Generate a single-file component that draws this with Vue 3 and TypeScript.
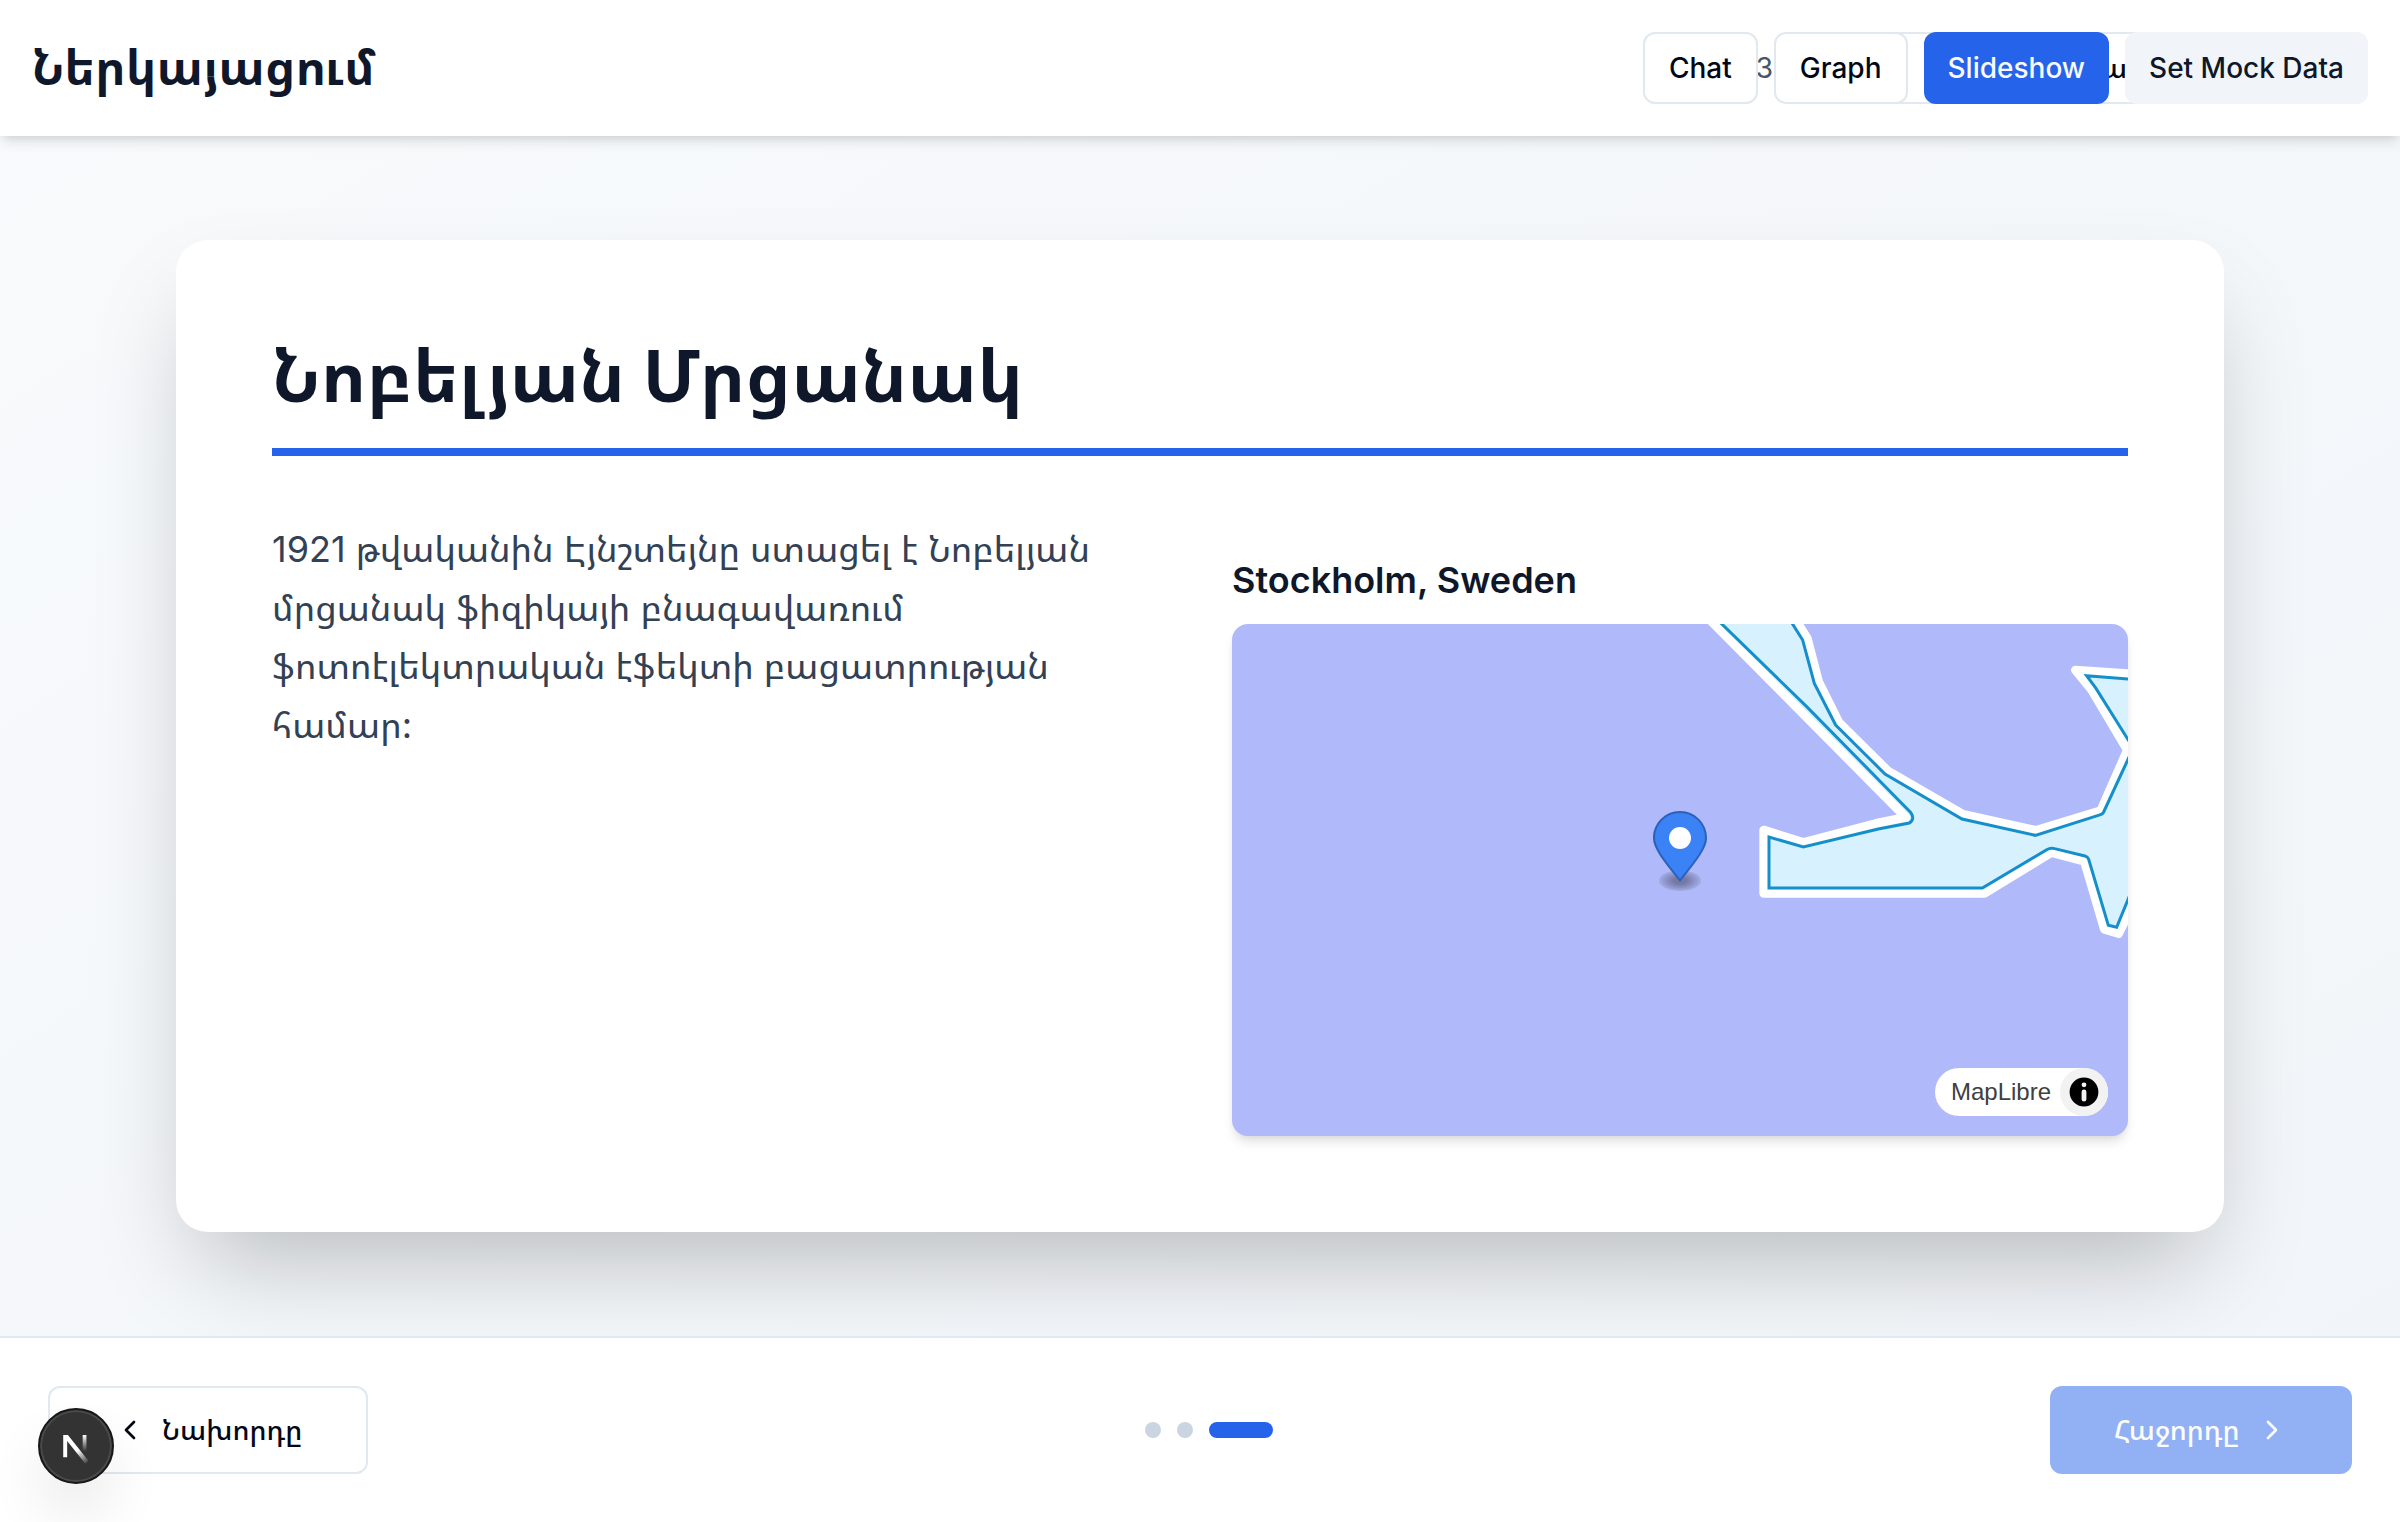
<script setup lang="ts">
interface NavButton {
  label: string
  kind: 'outline' | 'primary' | 'secondary'
}

const navButtons: NavButton[] = [
  { label: 'Chat', kind: 'outline' },
  { label: 'Graph', kind: 'outline' },
  { label: 'Slideshow', kind: 'primary' },
  { label: 'Set Mock Data', kind: 'secondary' },
]

const lines: string[] = [
  '1921 թվականին Էյնշտեյնը ստացել է Նոբելյան',
  'մրցանակ ֆիզիկայի բնագավառում',
  'ֆոտոէլեկտրական էֆեկտի բացատրության',
  'համար:',
]

const slideCount = 3
const current = 3

// Stacked translucent ellipses form the soft shadow below the marker
const shadowRings: [number, number][] = [
  [10.5, 5.25], [10.5, 5.25], [9.5, 4.77], [8.5, 4.3], [7.5, 3.82],
  [6.5, 3.34], [5.5, 2.86], [4.5, 2.39], [3.5, 1.91],
]
</script>

<template>
  <div class="page">
    <header class="header">
      <h1 class="brand">Ներկայացում</h1>
      <div class="under">
        <span class="counter">{{ current }}</span>
        <span class="under-button"><span>ա</span></span>
      </div>
      <nav class="nav">
        <button v-for="b in navButtons" :key="b.label" class="btn" :class="b.kind">{{ b.label }}</button>
      </nav>
    </header>

    <main class="stage">
      <article class="card">
        <h2 class="title">Նոբելյան Մրցանակ</h2>
        <div class="columns">
          <p class="body">
            <span v-for="(line, i) in lines" :key="i" class="line">{{ line }}</span>
          </p>
          <section class="place">
            <h3>Stockholm, Sweden</h3>
            <div class="map">
              <svg class="map-art" viewBox="0 0 896 512">
                <g transform="translate(408 -14) scale(.33333)">
                  <path class="water" d="M202 22 797 622 708 640 490 697 371 660V850H1034L1234 728 1333 754 1393 958 1436 971 1520 800V300L1462 420 1382 602 1187 661 969 613 743 482 597 337 536 215 502 85 460 18Z" />
                  <path class="water" d="M1520 195 1306 180 1355 240 1462 420 1520 420Z" />
                  <path class="shore-outer" d="M202 22 797 622 708 640 490 697 371 660V850H1034L1234 728 1333 754 1393 958 1436 971 1520 800" />
                  <path class="shore-outer" d="M460 18 502 85 536 215 597 337 743 482 969 613 1187 661 1382 602 1462 420 1355 240 1306 180 1520 195" />
                  <path class="shore-inner" d="M225 22 500 290 812 607Q826 628 808 639L715 657 490 711 387 681V834H1027L1220 719Q1232 712 1244 716L1335 738Q1343 740 1346 748L1405 946 1430 952 1500 780" />
                  <path class="shore-inner" d="M440 14 488 90 523 220 587 345 735 492 966 627 1186 676 1382 614Q1388 612 1391 606L1500 370" />
                  <path class="shore-inner" d="M1500 210 1340 197 1368 235 1500 446" />
                </g>
              </svg>
              <svg class="pin" viewBox="0 0 27 41">
                <g transform="translate(3 29)">
                  <ellipse v-for="([rx, ry], i) in shadowRings" :key="i" cx="10.5" cy="5.8" :rx="rx" :ry="ry" opacity=".045" />
                </g>
                <path fill="#3b82f6" d="M27 13.5C27 19.07 20.25 27 13.5 35.4C6.75 27 0 19.22 0 13.5C0 6.04 6.04 0 13.5 0S27 6.04 27 13.5Z" />
                <path fill="none" stroke="#000" stroke-opacity=".25" d="M26.5 13.5C26.5 19 20 26.5 13.5 34.7C7 26.5 .5 19 .5 13.5A13 13 0 0 1 26.5 13.5Z" />
                <circle cx="13.5" cy="13.5" r="5.5" fill="#fff" />
              </svg>
              <div class="attribution">
                <span>MapLibre</span>
                <i class="info">
                  <svg viewBox="0 0 20 20" fill-rule="evenodd">
                    <path d="M4 10a6 6 0 1 0 12 0 6 6 0 1 0-12 0m5-3a1 1 0 1 0 2 0 1 1 0 1 0-2 0m0 3a1 1 0 1 1 2 0v3a1 1 0 1 1-2 0" />
                  </svg>
                </i>
              </div>
            </div>
          </section>
        </div>
      </article>
    </main>

    <footer class="footer">
      <button class="step prev">
        <svg viewBox="0 0 24 24"><path d="m15 18-6-6 6-6" /></svg>
        <span>Նախորդը</span>
      </button>
      <div class="dots">
        <i v-for="n in slideCount" :key="n" :class="{ active: n === current }"></i>
      </div>
      <button class="step next">
        <span>Հաջորդը</span>
        <svg viewBox="0 0 24 24"><path d="m9 18 6-6-6-6" /></svg>
      </button>
    </footer>

    <div class="dev-badge">
      <svg viewBox="0 0 40 40" fill="none">
        <defs>
          <linearGradient id="stem" x1="0" y1="0" x2="0" y2="1">
            <stop stop-color="#fff" /><stop offset="1" stop-color="#fff" stop-opacity="0" />
          </linearGradient>
          <linearGradient id="slash" gradientUnits="userSpaceOnUse" x1="21.5" y1="22" x2="27.2" y2="29.5">
            <stop stop-color="#fff" /><stop offset="1" stop-color="#fff" stop-opacity="0" />
          </linearGradient>
        </defs>
        <rect x="23.7" y="13.9" width="2.1" height="9" fill="url(#stem)" />
        <path d="M12.9 13.9V26.2H15.1V17.2L25.2 29.8 27 28.4 15.5 13.9Z" fill="url(#slash)" />
      </svg>
    </div>
  </div>
</template>

<style>
body {
  margin: 0;
  overflow: hidden;
}
</style>

<style scoped>
* {
  box-sizing: border-box;
}
.page {
  width: 2400px;
  height: 1522px;
  display: flex;
  flex-direction: column;
  position: relative;
  overflow: hidden;
  background: linear-gradient(to bottom right, #f8fafc, #f1f5f9);
  font-family: Inter, 'Noto Sans Armenian', 'DejaVu Sans', sans-serif;
  color: #0f172a;
}
h1, h2, h3, p {
  margin: 0;
}
button {
  font: inherit;
  margin: 0;
}
.line {
  white-space: nowrap;
}
.header {
  height: 136px;
  flex: none;
  display: flex;
  align-items: center;
  justify-content: space-between;
  padding: 0 32px;
  background: #fff;
  position: relative;
  z-index: 2;
  box-shadow: 0 8px 12px -2px rgb(0 0 0 / .1), 0 4px 8px -4px rgb(0 0 0 / .1);
}
.brand {
  font-size: 48px;
  line-height: 64px;
  font-weight: 700;
}
.nav {
  display: flex;
  gap: 16px;
  position: relative;
}
.btn {
  height: 72px;
  padding: 0 24px;
  border: 0;
  border-radius: 12px;
  font-size: 28px;
  line-height: 40px;
  font-weight: 500;
  white-space: nowrap;
}
.outline {
  background: #fff;
  border: 2px solid #e2e8f0;
  color: #020817;
}
.primary {
  background: #2563eb;
  color: #f8fafc;
}
.secondary {
  background: #f1f5f9;
  color: #0f172a;
}
/* slide controls that the floating nav lies over */
.under {
  position: absolute;
  right: 32px;
  top: 32px;
  height: 72px;
  display: flex;
  align-items: center;
  gap: 32px;
  font-size: 28px;
  font-weight: 400;
}
.counter {
  color: #475569;
  line-height: 40px;
}
.under-button {
  width: 563px;
  height: 72px;
  border: 2px solid #e2e8f0;
  border-radius: 12px;
  background: #fff;
  color: #020817;
  font-weight: 500;
  line-height: 68px;
  padding-left: 294px;
}
.stage {
  flex: 1;
  padding: 104px 176px;
  display: flex;
}
.card {
  flex: 1;
  background: #fff;
  border-radius: 32px;
  padding: 96px;
  box-shadow: 0 50px 100px -24px rgb(0 0 0 / .25);
}
.title {
  height: 120px;
  border-bottom: 8px solid #2563eb;
  font-size: 72px;
  line-height: 80px;
  font-weight: 700;
}
.columns {
  margin-top: 64px;
  display: grid;
  grid-template-columns: 1fr 1fr;
  gap: 64px;
}
.body {
  font-size: 36px;
  line-height: 58.5px;
  color: #334155;
  display: flex;
  flex-direction: column;
  align-items: flex-start;
}
.place {
  padding-top: 32px;
}
.place h3 {
  font-size: 36px;
  line-height: 56px;
  font-weight: 600;
  margin-bottom: 16px;
}
.map {
  height: 512px;
  border-radius: 16px;
  position: relative;
  background: #b0b9f9;
  box-shadow: 0 8px 12px -2px rgb(0 0 0 / .1), 0 4px 8px -4px rgb(0 0 0 / .1);
}
.map-art {
  display: block;
  width: 100%;
  height: 100%;
  border-radius: 16px;
  overflow: hidden;
}
.water {
  fill: #d8f1ff;
}
.shore-outer, .shore-inner {
  fill: none;
  stroke: #fff;
  stroke-width: 26;
  stroke-linejoin: round;
}
.shore-inner {
  stroke: #158fcb;
  stroke-width: 9;
  stroke-linejoin: miter;
}
.pin {
  position: absolute;
  left: 421px;
  top: 187px;
  width: 54px;
  height: 82px;
}
.attribution {
  position: absolute;
  right: 20px;
  bottom: 20px;
  height: 48px;
  width: 173px;
  padding-left: 16px;
  border-radius: 24px;
  background: #fff;
  display: flex;
  align-items: center;
  justify-content: space-between;
  font: 24px/40px 'Liberation Sans', Arial, sans-serif;
  color: #404040;
}
.info {
  width: 48px;
  height: 48px;
  border-radius: 50%;
  background: #f2f2f2;
}
.info svg {
  display: block;
  width: 48px;
  height: 48px;
}
.footer {
  height: 186px;
  flex: none;
  border-top: 2px solid #e2e8f0;
  background: #fff;
  padding: 0 48px;
  display: flex;
  align-items: center;
  justify-content: space-between;
  position: relative;
}
.step {
  height: 88px;
  border-radius: 12px;
  display: flex;
  align-items: center;
  font-size: 28px;
  font-weight: 500;
  line-height: 40px;
  white-space: nowrap;
}
.step svg {
  width: 32px;
  height: 32px;
  flex: none;
  fill: none;
  stroke: currentColor;
  stroke-width: 2;
  stroke-linecap: round;
  stroke-linejoin: round;
}
.prev {
  width: 320px;
  border: 2px solid #e2e8f0;
  background: #fff;
  color: #020817;
  padding: 0 0 0 64px;
  gap: 16px;
}
.next {
  width: 302px;
  border: 0;
  background: #92b1f5;
  color: #fcfdfe;
  padding: 0 64px;
  justify-content: space-between;
}
.dots {
  display: flex;
  gap: 16px;
}
.dots i {
  width: 16px;
  height: 16px;
  border-radius: 8px;
  background: #cbd5e1;
}
.dots .active {
  width: 64px;
  background: #2563eb;
}
.dev-badge {
  position: absolute;
  left: 38px;
  top: 1408px;
  width: 76px;
  height: 76px;
  border-radius: 50%;
  background: #333;
  border: 2px solid #171717;
  box-shadow: inset 0 0 0 2px #4a4a4a, 0 32px 64px -16px rgb(0 0 0 / .24);
}
.dev-badge svg {
  display: block;
  width: 72px;
  height: 72px;
}
</style>
